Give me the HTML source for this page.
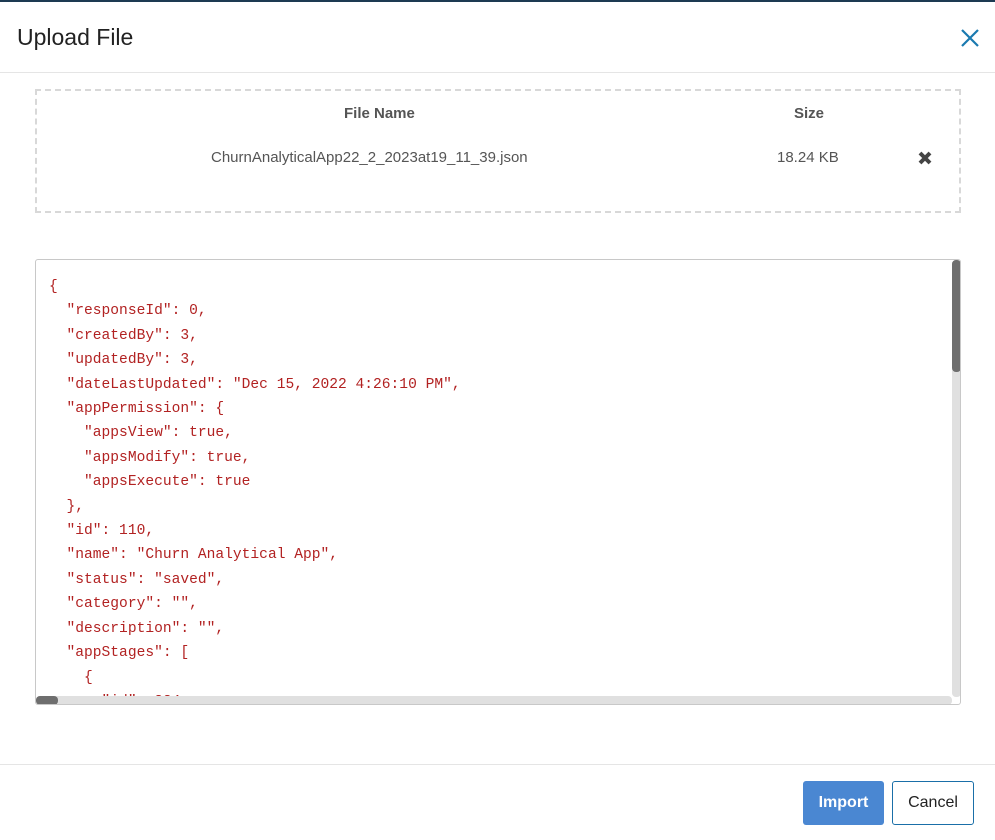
<!DOCTYPE html>
<html><head><meta charset="utf-8"><style>
*{box-sizing:border-box;margin:0;padding:0}
body{width:995px;height:840px;background:#fff;font-family:"Liberation Sans",Arial,sans-serif;position:relative;overflow:hidden}
.topbar{position:absolute;left:0;top:0;width:995px;height:2px;background:#1d3a52}
.title{position:absolute;left:17px;top:24px;font-size:23px;color:#222}
.close{position:absolute;left:960px;top:28px}
.hr1{position:absolute;left:0;top:72px;width:995px;height:1px;background:#e5e5e5}
.drop{position:absolute;left:35px;top:89px;width:926px;height:124px;border:2px dashed #d8d8d8}
.h{position:absolute;font-size:15px;font-weight:bold;color:#555}
.v{position:absolute;font-size:15px;color:#555}
.code{position:absolute;left:35px;top:259px;width:926px;height:446px;border:1px solid #c8c8c8;border-radius:3px;overflow:hidden}
pre{position:absolute;left:13px;top:15px;font-family:"Liberation Mono","DejaVu Sans Mono",monospace;font-size:14.6px;line-height:24.4px;color:#b22222}
.vs{position:absolute;left:916px;top:0;width:9px;height:437px;background:#e0e0e0;border-radius:4px}
.vt{position:absolute;left:916px;top:0;width:9px;height:112px;background:#6e6e6e;border-radius:4px}
.hs{position:absolute;left:0;top:436px;width:916px;height:9px;background:#e0e0e0;border-radius:4px}
.ht{position:absolute;left:0;top:436px;width:22px;height:9px;background:#6e6e6e;border-radius:4px}
.hr2{position:absolute;left:0;top:764px;width:995px;height:1px;background:#e5e5e5}
.btn{position:absolute;top:781px;height:44px;font-size:16px;display:flex;align-items:center;justify-content:center;border-radius:3px}
</style></head><body>
<div class="topbar"></div>
<div class="title">Upload File</div>
<svg class="close" width="20" height="20" viewBox="0 0 20 20"><path d="M2 2L18 18M18 2L2 18" stroke="#1a7ab0" stroke-width="2.2"/></svg>
<div class="hr1"></div>
<div class="drop">
<div class="h" style="left:307px;top:14px">File Name</div>
<div class="h" style="left:757px;top:14px">Size</div>
<div class="v" style="left:174px;top:58px">ChurnAnalyticalApp22_2_2023at19_11_39.json</div>
<div class="v" style="left:740px;top:58px">18.24 KB</div>
<svg style="position:absolute;left:880px;top:59px" width="16" height="16" viewBox="0 0 16 16"><path d="M3 3L13 13M13 3L3 13" stroke="#444" stroke-width="4"/></svg>
</div>
<div class="code">
<pre>{
  "responseId": 0,
  "createdBy": 3,
  "updatedBy": 3,
  "dateLastUpdated": "Dec 15, 2022 4:26:10 PM",
  "appPermission": {
    "appsView": true,
    "appsModify": true,
    "appsExecute": true
  },
  "id": 110,
  "name": "Churn Analytical App",
  "status": "saved",
  "category": "",
  "description": "",
  "appStages": [
    {
      "id": 334,</pre>
<div class="vs"></div><div class="vt"></div>
<div class="hs"></div><div class="ht"></div>
</div>
<div class="hr2"></div>
<div class="btn" style="left:803px;width:81px;background:#4a87d2;color:#fff;font-weight:bold">Import</div>
<div class="btn" style="left:892px;width:82px;border:1px solid #1a6fa8;color:#222">Cancel</div>
</body></html>
